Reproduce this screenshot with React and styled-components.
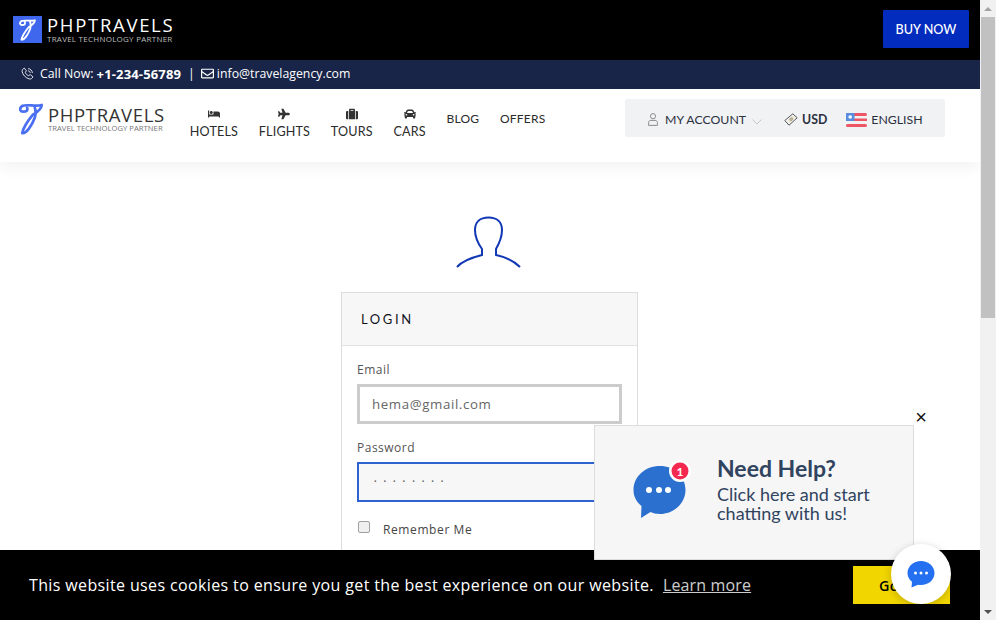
import React from "react";
import styled, { createGlobalStyle } from "styled-components";
import { FaBed, FaPlane, FaSuitcase, FaCar, FaRegEnvelope } from "react-icons/fa";

const Global = createGlobalStyle`
  html, body { margin: 0; padding: 0; height: 100%; overflow: hidden; background: #fff; }
  * { box-sizing: border-box; }
  body { font-family: "Lato", "Liberation Sans", sans-serif; }
`;

const Shell = styled.div`
  position: relative;
  display: flex;
  width: 996px;
  height: 620px;
  overflow: hidden;
`;

const Page = styled.div`
  width: 980px;
  height: 620px;
  overflow: hidden;
  display: flex;
  flex-direction: column;
`;

const Scrollbar = styled.div`
  width: 16px;
  height: 620px;
  background: #f1f1f1;
  display: flex;
  flex-direction: column;
  align-items: center;
`;

const ScrollArrow = styled.div`
  width: 16px;
  height: 17px;
  display: flex;
  align-items: center;
  justify-content: center;
  &::after {
    content: "";
    border-left: 4px solid transparent;
    border-right: 4px solid transparent;
    ${(p) => (p.$down ? "border-top: 4px solid #505050;" : "border-bottom: 4px solid #a3a3a3;")}
  }
`;

const ScrollThumb = styled.div`
  width: 14px;
  height: 301px;
  background: #c1c1c1;
`;

const ScrollTrack = styled.div`
  flex: 1;
`;

const TopBar = styled.div`
  height: 60px;
  background: #000;
  display: flex;
  align-items: center;
  justify-content: space-between;
  padding: 0 11px 1px 13px;
`;

const BrandWrap = styled.div`
  display: flex;
  align-items: center;
  gap: ${(p) => p.$gap}px;
`;

const LogoSquare = styled.div`
  width: 29px;
  height: 27px;
  background: #3f67ee;
  display: flex;
  align-items: center;
  justify-content: center;
`;

const BrandText = styled.div`
  display: flex;
  flex-direction: column;
  font-family: "Open Sans", sans-serif;
  color: ${(p) => p.$color};
`;

const BrandName = styled.span`
  font-size: 18.5px;
  line-height: 18px;
  letter-spacing: ${(p) => p.$spacing}px;
  font-weight: 500;
  white-space: nowrap;
`;

const BrandTag = styled.span`
  font-size: ${(p) => p.$size}px;
  line-height: 9px;
  letter-spacing: ${(p) => p.$spacing}px;
  white-space: nowrap;
  color: ${(p) => p.$color};
`;

const BuyButton = styled.a`
  width: 86px;
  height: 38px;
  margin-bottom: 1px;
  background: #022cbd;
  color: #fff;
  display: flex;
  align-items: center;
  justify-content: center;
  font-size: 12.6px;
  font-weight: 500;
  border-radius: 1px;
`;

const InfoBar = styled.div`
  height: 29px;
  background: #182548;
  color: #fff;
  display: flex;
  align-items: center;
  padding: 0 0 2px 21px;
  font-family: "Open Sans", sans-serif;
  font-size: 12.3px;
  font-weight: 500;
  b { font-weight: 700; font-size: 13px; letter-spacing: 0.15px; }
`;

const InfoIcon = styled.span`
  display: inline-flex;
  margin-right: ${(p) => p.$gap}px;
`;

const Divider = styled.span`
  margin: 0 6px 0 7px;
`;

const NavBar = styled.header`
  height: 73px;
  background: #fff;
  box-shadow: 0 6px 14px rgba(0, 0, 0, 0.05);
  display: flex;
  align-items: flex-start;
  padding: 14px 35px 0 19px;
  position: relative;
`;

const NavList = styled.nav`
  display: flex;
  align-items: flex-start;
  margin-left: 25px;
  gap: 20.8px;
  padding-top: 5px;
`;

const NavItem = styled.a`
  display: flex;
  flex-direction: column;
  align-items: center;
  color: #2b2b2b;
  font-size: 12.6px;
  line-height: 16px;
  letter-spacing: 0.15px;
  svg { width: auto; height: 12px; margin-bottom: 4px; color: #333; }
`;

const NavPlain = styled.a`
  color: #2b2b2b;
  font-size: 12px;
  line-height: 16px;
  letter-spacing: 0.2px;
  padding-top: 3px;
`;

const AccountBox = styled.div`
  width: 320px;
  height: 38px;
  margin-left: auto;
  margin-top: -4px;
  background: #f1f2f4;
  border-radius: 2px;
  display: flex;
  align-items: center;
  padding: 3px 0 0 23px;
  font-size: 12.3px;
  color: #2b3040;
`;

const AccountText = styled.span`
  margin-left: ${(p) => p.$left || 0}px;
  font-weight: ${(p) => (p.$bold ? 700 : 400)};
`;

const Main = styled.main`
  flex: 1;
  display: flex;
  flex-direction: column;
  align-items: center;
  padding-top: 54px;
  margin-left: -1px;
`;

const AvatarWrap = styled.div`
  display: flex;
  margin-left: -2px;
`;

const Card = styled.section`
  width: 297px;
  margin-top: 22px;
  border: 1px solid #ddd;
  flex: 1;
`;

const CardHead = styled.div`
  height: 53px;
  background: #f7f7f7;
  border-bottom: 1px solid #e3e3e3;
  display: flex;
  align-items: center;
  padding-left: 19px;
  font-size: 13px;
  letter-spacing: 2.6px;
  color: #11131c;
`;

const CardBody = styled.div`
  padding: 16px 15px 0;
  font-family: "Open Sans", sans-serif;
`;

const Field = styled.label`
  display: block;
  font-size: 12px;
  letter-spacing: 0.5px;
  line-height: 16px;
  color: #555;
  margin-bottom: 16px;
`;

const Input = styled.div`
  height: 40px;
  margin-top: 6px;
  border: ${(p) => (p.$focus ? "2px solid #2d63d1" : "3px solid #ccc")};
  background: ${(p) => (p.$focus ? "#f7f7f7" : "#fff")};
  padding-left: ${(p) => (p.$focus ? 15 : 12)}px;
  display: flex;
  align-items: center;
  font-size: ${(p) => (p.$focus ? 7 : 13.3)}px;
  letter-spacing: ${(p) => (p.$focus ? 6.9 : 0.6)}px;
  color: #666;
`;

const CheckRow = styled.div`
  display: flex;
  align-items: center;
  font-size: 12px;
  letter-spacing: 0.6px;
  color: #444;
  margin-top: 19px;
`;

const Box = styled.span`
  width: 12px;
  height: 12px;
  border: 1px solid #a0a0a0;
  border-radius: 2px;
  background: #efefef;
  margin-right: 13px;
  margin-left: 1px;
  margin-top: -5px;
`;

const CookieBar = styled.div`
  position: absolute;
  left: 0;
  bottom: 0;
  width: 980px;
  height: 70px;
  background: #000;
  color: #fff;
  display: flex;
  align-items: center;
  padding: 0 30px 0 29px;
  font-family: "Open Sans", sans-serif;
  font-size: 16px;
  letter-spacing: 0.37px;
`;

const LearnMore = styled.a`
  margin-left: 9px;
  opacity: 0.8;
  letter-spacing: 0.15px;
  text-decoration: underline;
`;

const GotIt = styled.a`
  margin-left: auto;
  width: 97px;
  height: 38px;
  background: #f1d600;
  color: #000;
  display: flex;
  align-items: center;
  justify-content: center;
  font-size: 14.4px;
  font-weight: 600;
`;

const HelpPopup = styled.div`
  position: absolute;
  left: 594px;
  top: 425px;
  width: 320px;
  height: 135px;
  background: #f6f6f6;
  border: 1px solid #ddd;
  display: flex;
  align-items: center;
  padding: 0 0 8px 38px;
`;

const HelpText = styled.div`
  margin-left: 26px;
  color: #30435f;
`;

const HelpTitle = styled.div`
  font-size: 23px;
  font-weight: 700;
  line-height: 28px;
  margin-bottom: 3px;
`;

const HelpLine = styled.div`
  font-size: 18px;
  line-height: 19px;
`;

const CloseMark = styled.div`
  position: absolute;
  left: 914px;
  top: 408px;
  width: 14px;
  height: 18px;
  display: flex;
  align-items: center;
  justify-content: center;
  font-size: 20px;
  font-family: "Liberation Sans", sans-serif;
  color: #111;
`;

const ChatFab = styled.div`
  position: absolute;
  left: 891px;
  top: 544px;
  width: 60px;
  height: 60px;
  border-radius: 50%;
  background: #fff;
  box-shadow: 0 2px 8px rgba(0, 0, 0, 0.2);
  display: flex;
  align-items: center;
  justify-content: center;
`;

const LogoMark = ({ color, width, height }) => (
  <svg width={width} height={height} viewBox="5 5 24 33" fill="none">
    <path
      d="M8 8 C13 6 22 9 28 7 C28 12 22 15 19 17 C14 23 9 30 8 36 C12 37 18 28 21 20 C22 16 22 13 21 10 M8 8 C4 11 6 14 9 14 C12 14 14 13 13 10"
      stroke={color}
      strokeWidth="2.8"
      strokeLinecap="round"
      strokeLinejoin="round"
    />
  </svg>
);

const PhoneIcon = () => (
  <svg width="13" height="13" viewBox="0 0 24 24" fill="none" stroke="#fff" strokeWidth="1.6">
    <path d="M6 2 L10 7 L8 10 C9 13 11 15 14 16 L17 14 L22 18 C21 21 18 23 15 22 C8 20 3 14 2 8 C2 5 4 3 6 2 Z" />
    <path d="M13 3 C17 3 21 7 21 11 M13 7 C15 7 17 9 17 11" />
  </svg>
);

const AvatarIcon = () => (
  <svg width="66" height="54" viewBox="0 0 66 54" fill="none" stroke="#1238b4" strokeWidth="2">
    <path d="M1 51 C6 45 14 42 26 39 L26 33 C21 26 19 21 19 14 C19 6 24 1.5 32.5 1.5 C41 1.5 46 6 46 14 C46 21 44 26 40 33 L40 39 C50 41 58 45 64 51" />
  </svg>
);

const SmallUser = () => (
  <svg width="10" height="13" viewBox="0 0 10 13" fill="none" stroke="#8a8f8a" strokeWidth="1">
    <circle cx="5" cy="3.2" r="2.6" />
    <path d="M0.6 12.4 V9.4 C0.6 8 1.8 7.4 3 7.4 H7 C8.2 7.4 9.4 8 9.4 9.4 V12.4 Z" />
  </svg>
);

const Chevron = () => (
  <svg width="10" height="6" viewBox="0 0 10 6" fill="none" stroke="#c4c6c9" strokeWidth="1" style={{ marginLeft: 6, marginTop: 4 }}>
    <path d="M0.5 0.5 L5 5 L9.5 0.5" />
  </svg>
);

const MoneyIcon = () => (
  <svg width="14" height="13" viewBox="0 0 14 13" fill="none" stroke="#555" strokeWidth="1" style={{ marginLeft: 22 }}>
    <path d="M0.8 7.5 L8.8 0.8 L13.2 4.8 L5 12.2 Z" />
    <path d="M4 7 L8.5 3.2 L10.5 5 L6 9.2 Z" fill="#e8dcb0" stroke="none" />
    <circle cx="7.2" cy="6.2" r="1.2" fill="none" stroke="#777" strokeWidth="0.7" />
  </svg>
);

const FlagIcon = () => (
  <svg width="21" height="14" viewBox="0 0 21 14" style={{ marginLeft: 19 }}>
    <rect width="21" height="14" rx="1.5" fill="#f2f2f2" />
    <rect width="21" height="3" rx="1.5" fill="#ee5565" />
    <rect y="5.5" width="21" height="2.5" fill="#ee5565" />
    <rect y="11" width="21" height="3" rx="1.5" fill="#ee5565" />
    <rect width="8.5" height="8" fill="#5b8ddf" />
    <circle cx="4.2" cy="4" r="1.8" fill="#fff" />
  </svg>
);

const HelpBubble = () => (
  <svg width="58" height="58" viewBox="0 0 58 58">
    <path
      d="M27 6 C41 6 52.5 16.5 52.5 30 C52.5 43 41 54 27 54 C23 54 20 53 17.5 52 L8 58 L8.5 46 C3 41.5 0.5 36 0.5 30 C0.5 16.5 12 6 27 6 Z"
      fill="#2b70cf"
    />
    <circle cx="16" cy="30" r="3" fill="#fff" />
    <circle cx="26" cy="30" r="3" fill="#fff" />
    <circle cx="35" cy="30" r="3" fill="#fff" />
    <circle cx="47" cy="11" r="11" fill="#fff" />
    <circle cx="47" cy="11" r="8.5" fill="#f5294f" />
    <text x="47" y="15.5" textAnchor="middle" fontSize="12" fontWeight="700" fill="#fff" fontFamily="Lato, sans-serif">1</text>
  </svg>
);

const FabBubble = () => (
  <svg width="28" height="28" viewBox="0 0 28 28">
    <path
      d="M14 1 C21.5 1 27.5 6.5 27.5 13 C27.5 20 21.5 25 14 25 C13 25 12 25 11 24.8 L4.5 27.5 L5 21.8 C2 19.5 0.5 16.5 0.5 13 C0.5 6.5 6.5 1 14 1 Z"
      fill="#2470f0"
    />
    <circle cx="8.5" cy="13" r="1.5" fill="#fff" />
    <circle cx="14" cy="13" r="1.5" fill="#fff" />
    <circle cx="19.5" cy="13" r="1.5" fill="#fff" />
  </svg>
);

export default function App() {
  return (
    <Shell>
      <Global />
      <Page>
        <TopBar>
          <BrandWrap $gap={5}>
            <LogoSquare>
              <LogoMark color="#fff" width={17} height={22} />
            </LogoSquare>
            <BrandText $color="#fff">
              <BrandName $spacing={1.7}>PHPTRAVELS</BrandName>
              <BrandTag $color="#bdbdbd" $size={8} $spacing={0.25}>TRAVEL TECHNOLOGY PARTNER</BrandTag>
            </BrandText>
          </BrandWrap>
          <BuyButton>BUY NOW</BuyButton>
        </TopBar>
        <InfoBar>
          <InfoIcon $gap={6}><PhoneIcon /></InfoIcon>
          Call Now:&nbsp;<b>+1-234-56789</b>
          <Divider>|</Divider>
          <InfoIcon $gap={3}><FaRegEnvelope size={13} /></InfoIcon>
          info@travelagency.com
        </InfoBar>
        <NavBar>
          <BrandWrap $gap={5}>
            <LogoMark color="#4a6ff0" width={24} height={32} />
            <BrandText $color="#333">
              <BrandName $spacing={0.65}>PHPTRAVELS</BrandName>
              <BrandTag $color="#777" $size={7.7} $spacing={0}>TRAVEL TECHNOLOGY PARTNER</BrandTag>
            </BrandText>
          </BrandWrap>
          <NavList>
            <NavItem><FaBed />HOTELS</NavItem>
            <NavItem><FaPlane />FLIGHTS</NavItem>
            <NavItem><FaSuitcase />TOURS</NavItem>
            <NavItem><FaCar />CARS</NavItem>
            <NavPlain>BLOG</NavPlain>
            <NavPlain>OFFERS</NavPlain>
          </NavList>
          <AccountBox>
            <SmallUser />
            <AccountText $left={7}>MY ACCOUNT</AccountText>
            <Chevron />
            <MoneyIcon />
            <AccountText $left={4} $bold>USD</AccountText>
            <FlagIcon />
            <AccountText $left={4}>ENGLISH</AccountText>
          </AccountBox>
        </NavBar>
        <Main>
          <AvatarWrap><AvatarIcon /></AvatarWrap>
          <Card>
            <CardHead>LOGIN</CardHead>
            <CardBody>
              <Field>
                Email
                <Input>hema@gmail.com</Input>
              </Field>
              <Field>
                Password
                <Input $focus>••••••••</Input>
              </Field>
              <CheckRow>
                <Box />
                Remember Me
              </CheckRow>
            </CardBody>
          </Card>
        </Main>
      </Page>
      <Scrollbar>
        <ScrollArrow />
        <ScrollThumb />
        <ScrollTrack />
        <ScrollArrow $down />
      </Scrollbar>
      <CookieBar>
        This website uses cookies to ensure you get the best experience on our website.
        <LearnMore>Learn more</LearnMore>
        <GotIt>Got it!</GotIt>
      </CookieBar>
      <CloseMark>×</CloseMark>
      <HelpPopup>
        <HelpBubble />
        <HelpText>
          <HelpTitle>Need Help?</HelpTitle>
          <HelpLine>Click here and start</HelpLine>
          <HelpLine>chatting with us!</HelpLine>
        </HelpText>
      </HelpPopup>
      <ChatFab>
        <FabBubble />
      </ChatFab>
    </Shell>
  );
}
